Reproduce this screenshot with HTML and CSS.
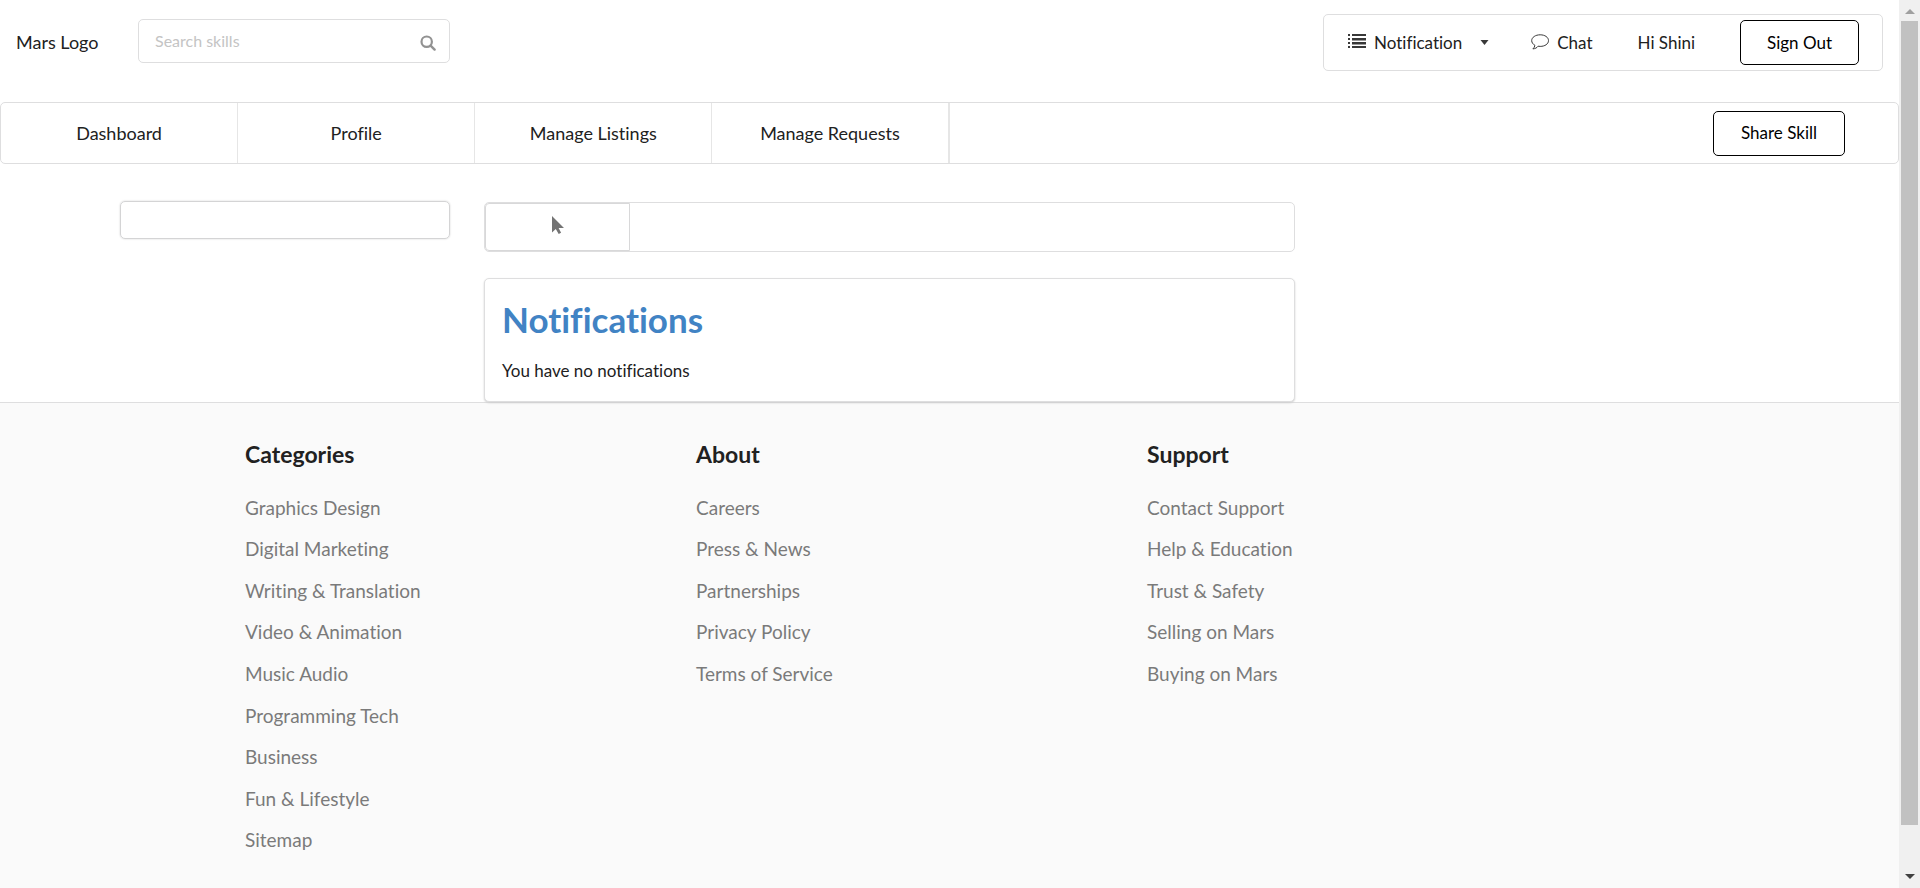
FILE: index.html
```html
<!DOCTYPE html>
<html lang="en">
<head>
<meta charset="utf-8">
<meta name="viewport" content="width=device-width, initial-scale=1">
<title>Notifications</title>
<link rel="stylesheet" href="styles.css">
</head>
<body>
<div class="page">
  <header class="topbar">
    <a class="brand" href="#">Mars Logo</a>
    <form class="search">
      <input class="search-input" type="text" placeholder="Search skills" aria-label="Search skills">
      <svg class="search-icon" viewBox="0 0 16 16" aria-hidden="true"><circle cx="6.7" cy="6.7" r="5.2" fill="none" stroke="currentColor" stroke-width="2.2"/><path d="M10.6 10.6L14.6 14.6" stroke="currentColor" stroke-width="2.4" stroke-linecap="round"/></svg>
    </form>
    <div class="account">
      <button class="account-item notify" type="button">
        <svg class="icon" viewBox="0 0 18 18" aria-hidden="true"><path fill="currentColor" d="M0 1h2v2H0zM4 1h14v2H4zM0 5h2v2H0zM4 5h14v2.500H4zM0 9h2v2H0zM4 9h14v2.500H4zM0 13h2v2H0zM4 13h14v2H4z"/></svg>
        <span>Notification</span>
        <svg class="caret" viewBox="0 0 8 5" aria-hidden="true"><path fill="currentColor" d="M0 0h8L4 5z"/></svg>
      </button>
      <a class="account-item chat" href="#">
        <svg class="icon" viewBox="0 0 18 18" aria-hidden="true"><path fill="none" stroke="currentColor" stroke-width="1" stroke-linejoin="round" d="M9.200 1.800C4.500 1.800.7 4.300.7 7.600c0 1.900 1.200 3.600 3.200 4.700-.2 1.500-.9 2.600-2 3.600 2.200-.2 4-1 5.200-2.700.7.100 1.400.2 2.100.2 4.700 0 8.300-2.500 8.300-5.800s-3.600-5.800-8.300-5.800z"/></svg>
        <span>Chat</span>
      </a>
      <span class="account-item hello">Hi Shini</span>
      <button class="outline-button" type="button">Sign Out</button>
    </div>
  </header>

  <nav class="mainnav">
    <a class="nav-link" href="#">Dashboard</a>
    <a class="nav-link" href="#">Profile</a>
    <a class="nav-link" href="#">Manage Listings</a>
    <a class="nav-link" href="#">Manage Requests</a>
    <button class="outline-button share" type="button">Share Skill</button>
  </nav>

  <main class="content">
    <div class="side-panel"></div>
    <section class="feed">
      <div class="tabs">
        <div class="tab">
          <svg class="pointer" viewBox="0 0 12 18" aria-hidden="true"><path fill="#737373" d="M0 0v16.500L3.800 13l2.900 5 2.400-1.200-2.500-4.900H12z"/></svg>
        </div>
      </div>
      <article class="card">
        <h1 class="card-title">Notifications</h1>
        <p class="card-text">You have no notifications</p>
      </article>
    </section>
  </main>

  <footer class="footer">
    <section class="footer-column">
      <h2 class="footer-title">Categories</h2>
      <ul class="footer-list">
        <li><a href="#">Graphics Design</a></li>
        <li><a href="#">Digital Marketing</a></li>
        <li><a href="#">Writing &amp; Translation</a></li>
        <li><a href="#">Video &amp; Animation</a></li>
        <li><a href="#">Music Audio</a></li>
        <li><a href="#">Programming Tech</a></li>
        <li><a href="#">Business</a></li>
        <li><a href="#">Fun &amp; Lifestyle</a></li>
        <li><a href="#">Sitemap</a></li>
      </ul>
    </section>
    <section class="footer-column">
      <h2 class="footer-title">About</h2>
      <ul class="footer-list">
        <li><a href="#">Careers</a></li>
        <li><a href="#">Press &amp; News</a></li>
        <li><a href="#">Partnerships</a></li>
        <li><a href="#">Privacy Policy</a></li>
        <li><a href="#">Terms of Service</a></li>
      </ul>
    </section>
    <section class="footer-column">
      <h2 class="footer-title">Support</h2>
      <ul class="footer-list">
        <li><a href="#">Contact Support</a></li>
        <li><a href="#">Help &amp; Education</a></li>
        <li><a href="#">Trust &amp; Safety</a></li>
        <li><a href="#">Selling on Mars</a></li>
        <li><a href="#">Buying on Mars</a></li>
      </ul>
    </section>
  </footer>
</div>
<div class="scrollbar" aria-hidden="true">
  <svg class="scroll-arrow up" viewBox="0 0 10 5"><path fill="currentColor" d="M0 5h10L5 0z"/></svg>
  <div class="scroll-track"><div class="scroll-thumb"></div></div>
  <svg class="scroll-arrow down" viewBox="0 0 10 5"><path fill="currentColor" d="M0 0h10L5 5z"/></svg>
</div>
</body>
</html>
```
FILE: styles.css
```css
* {
  box-sizing: border-box;
}

body {
  margin: 0;
  display: grid;
  grid-template-columns: minmax(0, 1fr) 21px;
  min-height: 100vh;
  background: #fff;
  color: #212121;
  font-family: Lato, "Liberation Sans", sans-serif;
  font-size: 18px;
  font-variant-ligatures: none;
  line-height: 24px;
}

a {
  color: inherit;
  text-decoration: none;
}

button,
input {
  font: inherit;
  font-variant-ligatures: none;
  color: inherit;
}

.page {
  display: flex;
  flex-direction: column;
}

.topbar {
  display: flex;
  align-items: flex-start;
  padding: 14px 16px 0;
}

.brand {
  width: 122px;
  padding-top: 16px;
}

.search {
  position: relative;
  width: 312px;
  margin-top: 5px;
}

.search-input {
  display: block;
  width: 100%;
  height: 44px;
  padding: 0 40px 2px 16px;
  border: 1px solid #dededf;
  border-radius: 5px;
  background: #fff;
  font-size: 16px;
}

.search-input::placeholder {
  color: #c4c4c4;
  opacity: 1;
}

.search-icon {
  position: absolute;
  top: 16px;
  right: 14px;
  width: 16px;
  height: 16px;
  color: #929292;
}

.account {
  display: flex;
  align-items: center;
  margin-left: auto;
  height: 57px;
  padding: 0 23px 0 24px;
  border: 1px solid #dededf;
  border-radius: 5px;
  font-size: 17px;
}

.account-item {
  display: flex;
  align-items: center;
  gap: 8px;
  padding: 0;
  border: 0;
  background: none;
}

.icon {
  width: 18px;
  height: 18px;
  margin-bottom: 1px;
  color: #383838;
}

.caret {
  width: 9px;
  height: 5px;
  margin-left: 10px;
  color: #383838;
}

.chat {
  margin-left: 42px;
}

.hello {
  margin: 0 45px;
}

.outline-button {
  height: 45px;
  padding: 0 26px;
  border: 1px solid #000;
  border-radius: 5px;
  background: #fff;
  color: #000;
  font-size: 17px;
}

.mainnav {
  display: flex;
  align-items: center;
  height: 62px;
  margin-top: 31px;
  border: 1px solid #dededf;
  border-radius: 5px;
}

.nav-link {
  display: flex;
  align-items: center;
  justify-content: center;
  flex: 0 0 12.5%;
  height: 100%;
  border-right: 1px solid #e6e6e6;
}

.nav-link:last-of-type {
  border-right-width: 2px;
}

.share {
  margin-left: auto;
  margin-right: 53px;
  padding: 0 27px;
}

.content {
  display: flex;
  align-items: flex-start;
  gap: 34px;
  padding: 37px 0 0 120px;
}

.side-panel {
  flex: 0 0 330px;
  height: 38px;
  border: 1px solid #d4d4d5;
  border-radius: 5px;
  box-shadow: 0 0 2px #d0d0d0;
}

.feed {
  flex: 0 1 811px;
  padding-top: 1px;
}

.tabs {
  height: 50px;
  border: 1px solid #dededf;
  border-radius: 5px;
}

.tab {
  display: flex;
  align-items: flex-start;
  justify-content: center;
  width: 145px;
  height: 100%;
  padding-top: 12px;
  border: 1px solid #d8d8d9;
  border-radius: 4px 0 0 4px;
}

.pointer {
  width: 12px;
  height: 18px;
}

.card {
  position: relative;
  margin-top: 26px;
  padding: 17px;
  border: 1px solid #dededf;
  border-radius: 5px;
  background: #fff;
  box-shadow: 0 1px 2px #cfcfcf;
}

.card-title {
  margin: 0;
  color: #4183c4;
  font-size: 35px;
  line-height: 46px;
}

.card-text {
  margin: 17px 0 1px;
  font-size: 17px;
}

.footer {
  display: grid;
  grid-template-columns: repeat(3, 451px);
  flex: 1;
  padding: 37px 0 26px 245px;
  border-top: 1px solid #dededf;
  background: #fafafa;
}

.footer-title {
  margin: 0;
  font-size: 23px;
  line-height: 28px;
}

.footer-list {
  display: grid;
  grid-template-rows: repeat(9, 1fr);
  align-items: center;
  min-height: 374px;
  margin: 19px 0 0;
  padding: 0;
  list-style: none;
  color: #7a7a7a;
  font-size: 19px;
}

.scrollbar {
  position: sticky;
  top: 0;
  display: flex;
  flex-direction: column;
  align-items: center;
  gap: 7px;
  height: 100vh;
  padding: 9px 1px;
  background: #f0f0f0;
}

.scroll-arrow {
  flex: none;
  width: 10px;
  height: 5px;
}

.up {
  color: #a0a0a0;
}

.down {
  color: #404040;
}

.scroll-track {
  flex: 1;
  width: 100%;
}

.scroll-thumb {
  width: 17px;
  height: 95%;
  margin-left: 1px;
  background: #c1c1c1;
}
```
